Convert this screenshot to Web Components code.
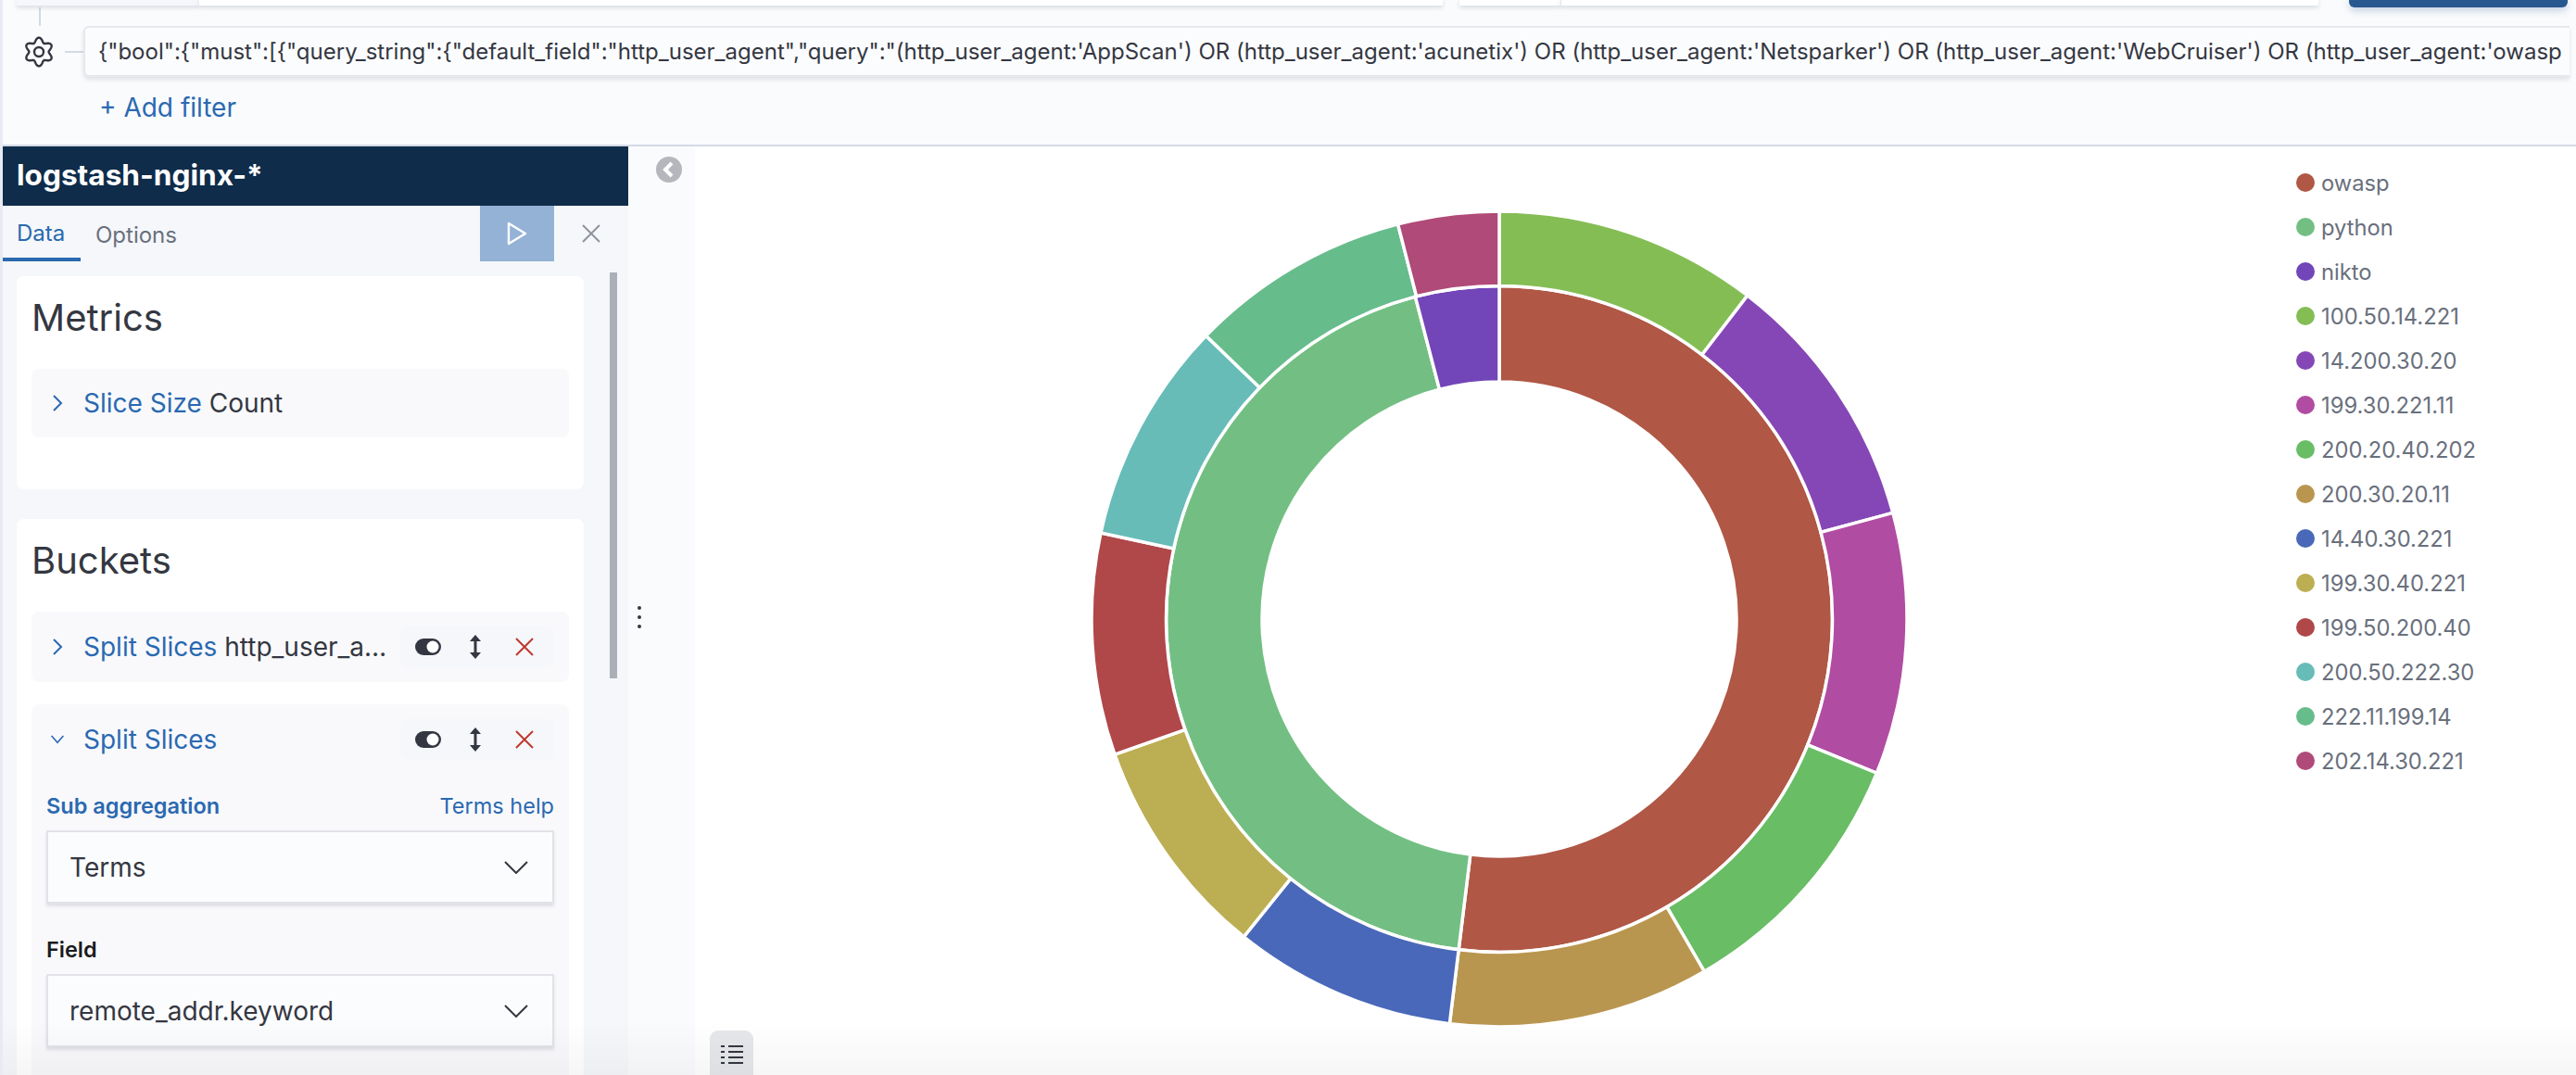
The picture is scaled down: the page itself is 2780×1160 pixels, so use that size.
<!DOCTYPE html>
<html>
<head>
<meta charset="utf-8">
<title>Visualize</title>
<style>
    html, body { margin: 0; padding: 0; }
    body { width: 2780px; height: 1160px; overflow: hidden; background: #fff; font-family: Inter, "Liberation Sans", sans-serif; color: #343741; }
</style>
</head>
<body>
<kbn-app>
    <filter-bar slot="top"></filter-bar>
    <vis-sidebar slot="side" index="logstash-nginx-*">
        <agg-group title="Metrics" class="metrics">
            <agg-row label="Slice Size" value="Count" short></agg-row>
        </agg-group>
        <agg-group title="Buckets">
            <agg-row label="Split Slices" value="http_user_agent.keyword" actions></agg-row>
            <agg-row label="Split Slices" actions open>
                <field-label>
                    <span slot="left">Sub aggregation</span>
                    <span slot="right">Terms help</span>
                </field-label>
                <select-box>Terms</select-box>
                <field-label plain><span slot="left">Field</span></field-label>
                <select-box>remote_addr.keyword</select-box>
            </agg-row>
        </agg-group>
    </vis-sidebar>
    <chart-panel slot="main"></chart-panel>
</kbn-app>

<script>
const SLICES = [
    ['owasp', '#b05745'], ['python', '#73bf83'], ['nikto', '#7245b8'],
    ['100.50.14.221', '#85bd55'], ['14.200.30.20', '#8547b6'], ['199.30.221.11', '#b14ca3'],
    ['200.20.40.202', '#69bd65'], ['200.30.20.11', '#b9964f'], ['14.40.30.221', '#4968b9'],
    ['199.30.40.221', '#bcae52'], ['199.50.200.40', '#b04749'], ['200.50.222.30', '#67bcb8'],
    ['222.11.199.14', '#67bc8c'], ['202.14.30.221', '#b04a78']
];

const CHEVRON_RIGHT = '<svg width="16" height="24" viewBox="0 0 16 24" fill="none" stroke="#2a69b0" stroke-width="2"><path d="M4 4l8 8-8 8"/></svg>';
const CHEVRON_DOWN = '<svg width="20" height="16" viewBox="0 0 20 16" fill="none" stroke="#2a69b0" stroke-width="2"><path d="M2 3l8 9 8-9"/></svg>';

class KbnApp extends HTMLElement {
    constructor() {
        super();
        this.attachShadow({ mode: 'open' });
        this.shadowRoot.innerHTML = `
            <style>
                :host {
                    display: flex;
                    flex-direction: column;
                    position: relative;
                    width: 2780px;
                    height: 1160px;
                    overflow: hidden;
                    box-sizing: border-box;
                    border-left: 3px solid #e8ebf2;
                }
                .work { flex: 1; min-height: 0; display: flex; }
                .fade {
                    position: absolute;
                    left: 0; right: 0; bottom: 0;
                    height: 60px;
                    pointer-events: none;
                    background: linear-gradient(to bottom, rgba(0,0,0,0), rgba(0,0,0,0.035));
                }
            </style>
            <slot name="top"></slot>
            <div class="work">
                <slot name="side"></slot>
                <slot name="main"></slot>
            </div>
            <div class="fade"></div>
        `;
    }
}

class FilterBar extends HTMLElement {
    constructor() {
        super();
        this.attachShadow({ mode: 'open' });
        // gear outline, six soft lobes
        let d = '';
        for (let i = 0; i <= 120; i++) {
            const t = i / 120 * Math.PI * 2;
            const r = 13 + 2.4 * Math.cos(6 * t);
            const x = 17 + r * Math.sin(t), y = 17 - r * Math.cos(t);
            d += (i ? 'L' : 'M') + x.toFixed(2) + ' ' + y.toFixed(2);
        }
        this.shadowRoot.innerHTML = `
            <style>
                :host {
                    display: block;
                    height: 158px;
                    flex: none;
                    box-sizing: border-box;
                    background: #fafbfd;
                    border-bottom: 2px solid #d3dae6;
                    font-family: Inter, "Liberation Sans", sans-serif;
                }
                .peek { display: flex; height: 8px; padding: 0 7px 0 15px; }
                .q {
                    height: 6px;
                    background: #fff;
                    box-shadow: 0 2px 5px rgba(65,78,101,.2);
                }
                .q.a { width: 197px; background: #f5f7fa; }
                .q.b { width: 1342px; margin-right: 18px; }
                .q.c { width: 109px; }
                .q.d { width: 817px; border-left: 1px solid #e3e6ec; margin-right: 33px; }
                .go { width: 236px; height: 8px; background: #27588f; border-radius: 0 0 6px 6px; box-shadow: 0 3px 8px rgba(39,88,143,.3); }
                .link { width: 2px; height: 20px; margin-left: 39px; background: #d3dae6; }
                .row { display: flex; align-items: center; height: 55px; padding-right: 7px; }
                .gear { width: 34px; height: 34px; margin-left: 22px; flex: none; }
                .tick { width: 20px; height: 2px; margin-left: 11px; margin-right: 0; background: #d3dae6; flex: none; }
                .pill {
                    flex: 1;
                    min-width: 0;
                    height: 55px;
                    box-sizing: border-box;
                    display: flex;
                    align-items: center;
                    padding-left: 14px;
                    background: #fbfcfe;
                    border: 2px solid #e6e8ec;
                    border-right: 0;
                    border-radius: 6px 0 0 6px;
                    box-shadow: 0 3px 4px rgba(65,78,101,.14);
                    font-size: 24px;
                    color: #343741;
                    white-space: nowrap;
                    overflow: hidden;
                }
                .add { padding: 17px 0 0 104px; font-size: 28px; line-height: 32px; color: #2a69b0; }
            </style>
            <div class="peek">
                <div class="q a"></div><div class="q b"></div><div class="q c"></div><div class="q d"></div><div class="go"></div>
            </div>
            <div class="link"></div>
            <div class="row">
                <svg class="gear" viewBox="0 0 34 34" fill="none" stroke="#343741" stroke-width="2.4" stroke-linejoin="round"><path d="${d}Z"/><circle cx="17" cy="17" r="5"/></svg>
                <div class="tick"></div>
                <div class="pill">{"bool":{"must":[{"query_string":{"default_field":"http_user_agent","query":"(http_user_agent:'AppScan') OR (http_user_agent:'acunetix') OR (http_user_agent:'Netsparker') OR (http_user_agent:'WebCruiser') OR (http_user_agent:'owasp</div>
            </div>
            <div class="add">+ Add filter</div>
        `;
    }
}

class VisSidebar extends HTMLElement {
    constructor() {
        super();
        this.attachShadow({ mode: 'open' });
        this.shadowRoot.innerHTML = `
            <style>
                :host {
                    display: flex;
                    flex-direction: column;
                    position: relative;
                    flex: none;
                    width: 675px;
                    background: #f5f7fa;
                    font-family: Inter, "Liberation Sans", sans-serif;
                }
                .head {
                    height: 64px;
                    flex: none;
                    display: flex;
                    align-items: center;
                    box-sizing: border-box;
                    padding: 0 0 4px 15px;
                    background: #0f2c4a;
                    color: #fff;
                    font-size: 31.6px;
                    font-weight: 700;
                }
                .tabs { height: 60px; flex: none; display: flex; align-items: stretch; font-size: 24px; }
                .tab { display: flex; align-items: center; box-sizing: border-box; padding: 2px 15px 0; color: #69707d; }
                .tab.on { width: 84px; color: #2a69b0; border-bottom: 4px solid #2a69b0; }
                .tab.opt { padding-left: 16px; }
                .run {
                    width: 80px;
                    margin-left: auto;
                    display: flex;
                    align-items: center;
                    justify-content: center;
                    background: #93b2d5;
                }
                .close { width: 80px; display: flex; align-items: center; justify-content: center; }
                .body { flex: 1; min-height: 0; overflow: hidden; padding: 16px 45px 0 15px; display: flex; flex-direction: column; gap: 32px; }
                .thumb { position: absolute; left: 655px; top: 136px; width: 8px; height: 438px; background: #abb0b8; }
            </style>
            <div class="head">${this.getAttribute('index')}</div>
            <div class="tabs">
                <div class="tab on">Data</div>
                <div class="tab opt">Options</div>
                <div class="run">
                    <svg width="22" height="26" viewBox="0 0 22 26" fill="none" stroke="#fff" stroke-width="2.4" stroke-linejoin="round"><path d="M2 2v22l18-11z"/></svg>
                </div>
                <div class="close">
                    <svg width="22" height="22" viewBox="0 0 22 22" fill="none" stroke="#8f949c" stroke-width="2"><path d="M2 2l18 18M20 2L2 20"/></svg>
                </div>
            </div>
            <div class="body"><slot></slot></div>
            <div class="thumb"></div>
        `;
    }
}

class AggGroup extends HTMLElement {
    constructor() {
        super();
        this.attachShadow({ mode: 'open' });
        this.shadowRoot.innerHTML = `
            <style>
                :host {
                    display: flex;
                    flex-direction: column;
                    flex: none;
                    gap: 24px;
                    width: 612px;
                    box-sizing: border-box;
                    padding: 21px 16px 0;
                    background: #fff;
                    border-radius: 8px;
                    color: #343741;
                }
                :host(.metrics) { height: 230px; }
                h3 { margin: 0 0 7px 0; font-size: 40px; line-height: 48px; font-weight: 400; }
            </style>
            <h3>${this.getAttribute('title')}</h3>
            <slot></slot>
        `;
    }
}

class AggRow extends HTMLElement {
    constructor() {
        super();
        this.attachShadow({ mode: 'open' });
        const open = this.hasAttribute('open');
        const value = this.getAttribute('value');
        const actions = this.hasAttribute('actions') ? `
            <div class="acts">
                <svg width="30" height="20" viewBox="0 0 30 20"><rect x="1" y="1" width="28" height="18" rx="9" fill="#343741"/><circle cx="20" cy="10" r="6.5" fill="#fff"/></svg>
                <svg width="14" height="26" viewBox="0 0 14 26" fill="#343741"><path d="M7 0l6 7H1zM7 26l6-7H1z"/><rect x="5.5" y="5" width="3" height="16"/></svg>
                <svg width="22" height="22" viewBox="0 0 22 22" fill="none" stroke="#bd3a2e" stroke-width="2"><path d="M2 2l18 18M20 2L2 20"/></svg>
            </div>` : '';
        this.shadowRoot.innerHTML = `
            <style>
                :host {
                    display: block;
                    flex: none;
                    background: #f9f9fc;
                    border-radius: 8px;
                    font-size: 28px;
                    color: #343741;
                }
                .top { display: flex; align-items: center; height: ${this.hasAttribute('short') ? 74 : 76}px; padding: 0 16px 0 20px; }
                .chev { width: 16px; flex: none; display: flex; justify-content: center; margin-right: 20px; }
                .txt { flex: 1; min-width: 0; white-space: nowrap; overflow: hidden; text-overflow: ellipsis; padding-bottom: 1px; }
                .txt b { font-weight: 400; color: #2a69b0; }
                .acts {
                    flex: none;
                    width: 166px;
                    height: 44px;
                    display: flex;
                    align-items: center;
                    box-sizing: border-box;
                    padding-left: 15px;
                    margin-left: 12px;
                    background: #f6f7fa;
                    border-radius: 8px;
                }
                .acts svg:nth-child(2) { margin-left: 29px; }
                .acts svg:nth-child(3) { margin-left: 35px; }
                .more { padding: 18px 16px 40px 16px; display: block; }
            </style>
            <div class="top">
                <div class="chev">${open ? CHEVRON_DOWN : CHEVRON_RIGHT}</div>
                <div class="txt"><b>${this.getAttribute('label')}</b>${value ? ' ' + value : ''}</div>
                ${actions}
            </div>
            ${open ? '<div class="more"><slot></slot></div>' : ''}
        `;
    }
}

class FieldLabel extends HTMLElement {
    constructor() {
        super();
        this.attachShadow({ mode: 'open' });
        const plain = this.hasAttribute('plain');
        this.shadowRoot.innerHTML = `
            <style>
                :host {
                    display: flex;
                    justify-content: space-between;
                    align-items: center;
                    height: 30px;
                    margin: ${plain ? '34px 0 12px' : '0 0 12px'};
                    font-size: 23.5px;
                    color: #2a69b0;
                }
                .l { font-weight: 600; color: ${plain ? '#1a1c21' : '#2a69b0'}; }
            </style>
            <span class="l"><slot name="left"></slot></span>
            <span><slot name="right"></slot></span>
        `;
    }
}

class SelectBox extends HTMLElement {
    constructor() {
        super();
        this.attachShadow({ mode: 'open' });
        this.shadowRoot.innerHTML = `
            <style>
                :host {
                    display: flex;
                    align-items: center;
                    justify-content: space-between;
                    box-sizing: border-box;
                    height: 79px;
                    padding: 0 26px 0 23px;
                    background: #fbfcfe;
                    border: 2px solid #e1e3e8;
                    box-shadow: 0 3px 3px rgba(65,78,101,.14);
                    font-size: 28px;
                    color: #343741;
                }
            </style>
            <span><slot></slot></span>
            <svg width="26" height="14" viewBox="0 0 26 14" fill="none" stroke="#343741" stroke-width="2"><path d="M1 1l12 12L25 1"/></svg>
        `;
    }
}

class ChartPanel extends HTMLElement {
    constructor() {
        super();
        this.attachShadow({ mode: 'open' });
        this.shadowRoot.innerHTML = `
            <style>
                :host { display: flex; flex: 1; min-width: 0; position: relative; background: #fff; font-family: Inter, "Liberation Sans", sans-serif; }
                .resizer {
                    width: 72px;
                    flex: none;
                    display: flex;
                    flex-direction: column;
                    background: #fafbfd;
                    position: relative;
                }
                .collapse { position: absolute; left: 30px; top: 11px; }
                .dots { position: absolute; left: 10px; top: 496px; display: flex; flex-direction: column; gap: 6px; }
                .dots i { width: 4px; height: 4px; border-radius: 50%; background: #343741; }
                .chart { margin: 60px 0 0 418px; width: 900px; height: 900px; flex: none; }
                .legend { margin-left: auto; width: 302px; padding-top: 15px; flex: none; }
                .toggle {
                    position: absolute;
                    left: 88px;
                    top: 954px;
                    width: 47px;
                    height: 60px;
                    background: #e5e7ea;
                    border-radius: 9px 9px 0 0;
                    display: flex;
                    justify-content: center;
                    padding-top: 16px;
                    box-sizing: border-box;
                }
            </style>
            <div class="resizer">
                <svg class="collapse" width="28" height="28" viewBox="0 0 28 28"><circle cx="14" cy="14" r="14" fill="#b5b7bd"/><path d="M17 7l-7 7 7 7" fill="none" stroke="#fff" stroke-width="4"/></svg>
                <div class="dots"><i></i><i></i><i></i></div>
            </div>
            <donut-chart class="chart"></donut-chart>
            <chart-legend class="legend"></chart-legend>
            <div class="toggle">
                <svg width="24" height="20" viewBox="0 0 24 20" fill="#343741">
                    <rect x="0" y="0" width="4" height="2"/><rect x="8" y="0" width="16" height="2"/>
                    <rect x="0" y="6" width="4" height="2"/><rect x="8" y="6" width="16" height="2"/>
                    <rect x="0" y="12" width="4" height="2"/><rect x="8" y="12" width="16" height="2"/>
                    <rect x="0" y="18" width="4" height="2"/><rect x="8" y="18" width="16" height="2"/>
                </svg>
            </div>
        `;
    }
}

class DonutChart extends HTMLElement {
    constructor() {
        super();
        this.attachShadow({ mode: 'open' });
        const cx = 450, cy = 450;
        const pt = (r, a) => {
            const t = a * Math.PI / 180;
            return (cx + r * Math.sin(t)).toFixed(2) + ' ' + (cy - r * Math.cos(t)).toFixed(2);
        };
        const arc = (r0, r1, a0, a1, fill) => {
            const large = a1 - a0 > 180 ? 1 : 0;
            return `<path fill="${fill}" d="M${pt(r1, a0)}A${r1} ${r1} 0 ${large} 1 ${pt(r1, a1)}L${pt(r0, a1)}A${r0} ${r0} 0 ${large} 0 ${pt(r0, a0)}Z"/>`;
        };
        const inner = [[0, 187, 0], [187, 345.4, 1], [345.4, 360, 2]];
        const outer = [[0, 37.5, 3], [37.5, 74.9, 4], [74.9, 112.2, 5], [112.2, 149.8, 6], [149.8, 187, 7],
            [187, 218.8, 8], [218.8, 250.6, 9], [250.6, 282.2, 10], [282.2, 314, 11], [314, 345.6, 12], [345.6, 360, 13]];
        let paths = inner.map(s => arc(256, 359.5, s[0], s[1], SLICES[s[2]][1])).join('');
        paths += outer.map(s => arc(359.5, 440, s[0], s[1], SLICES[s[2]][1])).join('');
        this.shadowRoot.innerHTML = `
            <style>
                :host { display: block; }
                svg { display: block; }
                path { stroke: #fff; stroke-width: 3.5; }
            </style>
            <svg width="900" height="900" viewBox="0 0 900 900">${paths}</svg>
        `;
    }
}

class ChartLegend extends HTMLElement {
    constructor() {
        super();
        this.attachShadow({ mode: 'open' });
        this.shadowRoot.innerHTML = `
            <style>
                :host { display: block; }
                .item { display: flex; align-items: center; height: 48px; font-size: 23.75px; color: #69707d; white-space: nowrap; }
                .dot { width: 20px; height: 20px; border-radius: 50%; margin-right: 7px; flex: none; }
            </style>
            ${SLICES.map(s => `<div class="item"><span class="dot" style="background:${s[1]}"></span>${s[0]}</div>`).join('')}
        `;
    }
}

customElements.define('kbn-app', KbnApp);
customElements.define('filter-bar', FilterBar);
customElements.define('vis-sidebar', VisSidebar);
customElements.define('agg-group', AggGroup);
customElements.define('agg-row', AggRow);
customElements.define('field-label', FieldLabel);
customElements.define('select-box', SelectBox);
customElements.define('chart-panel', ChartPanel);
customElements.define('donut-chart', DonutChart);
customElements.define('chart-legend', ChartLegend);
</script>
</body>
</html>
